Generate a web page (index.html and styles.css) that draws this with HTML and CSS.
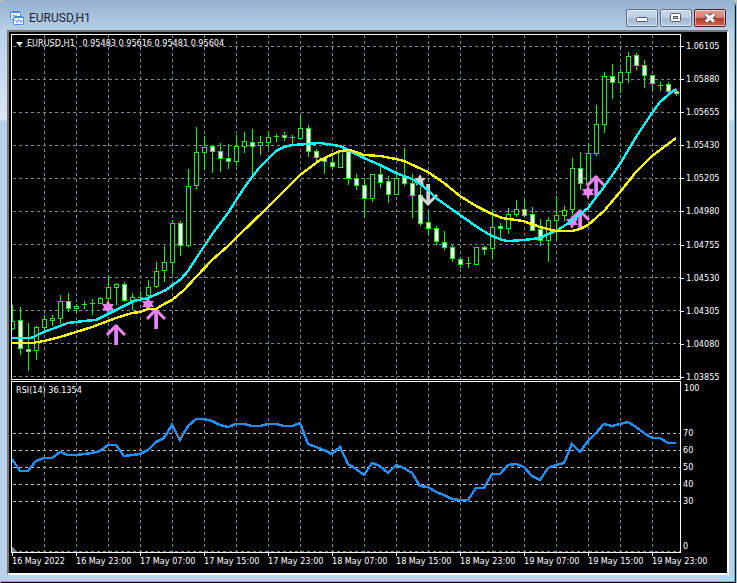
FILE: index.html
```html
<!DOCTYPE html>
<html lang="en">
<head>
    <meta charset="UTF-8">
    <meta name="viewport" content="width=device-width, initial-scale=1.0">
    <title>EURUSD,H1</title>
    <link rel="stylesheet" href="styles.css">
</head>
<body>
    <div class="window">
        <div class="titlebar">
            <svg class="logo" width="14" height="14" viewBox="0 0 14 14">
                <rect x="0.5" y="0.5" width="10" height="8" rx="1" fill="#fff" stroke="#4a8ae8"/>
                <path d="M0.5 1.5h10" stroke="#4a8ae8"/>
                <path d="M2 5.5l1.5-2 1.5 2 2-2" fill="none" stroke="#4a8ae8"/>
                <rect x="3.5" y="5.5" width="10" height="8" rx="1" fill="#fff" stroke="#4a8ae8"/>
                <path d="M3.5 6.5h10" stroke="#4a8ae8"/>
                <path d="M5 8.5l2 3 2-3 2 3 1-2" fill="none" stroke="#4a8ae8"/>
            </svg>
            <h1 class="title">EURUSD,H1</h1>
            <div class="controls">
                <button class="control" aria-label="Minimize">
                    <svg width="12" height="10" viewBox="0 0 12 10">
                        <rect x="0.5" y="4.5" width="11" height="4" rx="1" fill="#fff" stroke="#535a66"/>
                    </svg>
                </button>
                <button class="control" aria-label="Maximize">
                    <svg width="12" height="10" viewBox="0 0 12 10">
                        <rect x="0.5" y="0.5" width="10" height="8" rx="1" fill="#fff" stroke="#535a66"/>
                        <rect x="3.5" y="3.5" width="4" height="2" fill="#a9c0da" stroke="#535a66"/>
                    </svg>
                </button>
                <button class="control close" aria-label="Close">
                    <svg width="12" height="10" viewBox="0 0 12 10">
                        <path d="M2 1.5l8 7M10 1.5l-8 7" stroke="#5b4450" stroke-width="5"/>
                        <path d="M2 1.5l8 7M10 1.5l-8 7" stroke="#fff" stroke-width="3"/>
                    </svg>
                </button>
            </div>
        </div>
        <div class="chart">
            <div class="pane">
                <div class="legend">
                    <svg class="arrow" width="7" height="4" viewBox="0 0 7 4"><path d="M0 0h7L3.5 4z" fill="#fff"/></svg>
                    <span>EURUSD,H1&nbsp;&nbsp; 0.95483 0.95616 0.95481 0.95604</span>
                </div>
                <svg id="price" class="plot" viewBox="11 34 670 346">
                    <defs>
                        <g id="star6"><path d="M0-7L2-3H6L4 0 6 3H2L0 7-2 3H-6L-4 0-6-3H-2z"/></g>
                        <g id="star5"><path d="M0-6L2-2H6L3 1 4 6 0 3-4 6-3 1-6-2H-2z"/></g>
                        <g id="arrow">
                            <path d="M-1 2V21M-9 10L0 1" stroke="#8a6cff" stroke-width="2"/>
                            <path d="M0.5 1V21M-9 11L0 2 9 11" stroke-width="3"/>
                        </g>
                        <g id="arrow-down">
                            <path d="M-1 0V20" stroke="#7f8fb0" stroke-width="2"/>
                            <path d="M0.5 0V20M-9 11L0 20 9 11" stroke-width="3"/>
                        </g>
                    </defs>
                </svg>
            </div>
            <div class="axis price-axis" id="price-axis"></div>
            <div class="pane">
                <div class="legend">RSI(14) 36.1354</div>
                <svg id="rsi" class="plot" viewBox="11 381 670 172"></svg>
            </div>
            <div class="axis rsi-axis">
                <span class="label top">100</span>
                <div class="levels">
                    <span class="label">70</span>
                    <span class="label">60</span>
                    <span class="label">50</span>
                    <span class="label">40</span>
                    <span class="label">30</span>
                </div>
                <span class="label">0</span>
            </div>
            <div class="time-axis" id="time-axis"></div>
        </div>
    </div>
    <script src="chart.js"></script>
</body>
</html>
```
FILE: styles.css
```css
body {
  margin: 0;
  padding: 0 1px 1px 0;
  background: #b4bcc4;
  font-family: "DejaVu Sans Condensed", "DejaVu Sans", sans-serif;
  font-stretch: condensed;
}
.window {
  box-sizing: border-box;
  padding: 0 5px 6px 7px;
  border-right: 1px solid #3cc8e0;
  border-bottom: 1px solid #3cc8e0;
  border-radius: 6px 6px 0 0;
  box-shadow: 1px 1px 0 #000;
  margin-right: 1px;
  background: linear-gradient(#95b1cf 0, #b9d1ea 32px, #dbe7f5 120px, #b9d1ea 121px);
}
.titlebar {
  display: flex;
  align-items: center;
  height: 30px;
  padding: 0 3px;
}
.logo {
  margin-top: 6px;
}
.title {
  flex: 1;
  margin: 6px 0 0 5px;
  font: 12px/20px Roboto, sans-serif;
  color: #1c2430;
}
.controls {
  display: flex;
  gap: 2px;
  margin-top: 6px;
}
.control {
  box-sizing: border-box;
  display: flex;
  align-items: center;
  justify-content: center;
  width: 32px;
  height: 18px;
  padding: 0;
  border: 1px solid #5f7287;
  border-radius: 2px;
  box-shadow: inset 0 0 0 1px rgba(255,255,255,.5);
  background: linear-gradient(#c8d8ea 0, #bccfe4 50%, #9fb7d1 50%, #b4cae3 100%);
}
.control.close {
  border-color: #4f1f25;
  background: linear-gradient(#dba093 0, #cf7f70 50%, #b5342a 50%, #cf6a50 100%);
}
.chart {
  display: grid;
  grid-template-columns: minmax(0, 1fr) 46px;
  row-gap: 1px;
  padding: 2px 0 0 2px;
  border: 2px solid #fff;
  border-top-color: #777;
  border-left-color: #777;
  background: #000;
  color: #fff;
  font-size: 9px;
  line-height: 11px;
  white-space: nowrap;
}
.pane {
  position: relative;
}
.plot {
  display: block;
  width: 100%;
  shape-rendering: crispEdges;
}
.legend {
  position: absolute;
  left: 5px;
  top: 4px;
  display: flex;
  align-items: center;
  gap: 4px;
}
.axis {
  display: flex;
  flex-direction: column;
  justify-content: space-between;
}
.price-axis {
  padding-top: 7px;
  margin-bottom: -3px;
}
.price-axis .label {
  display: flex;
  align-items: center;
  gap: 2px;
}
.price-axis .label::before {
  content: "";
  width: 3px;
  height: 1px;
  background: #fff;
}
.rsi-axis {
  padding: 2px 0 1px 2px;
}
.rsi-axis .top {
  padding-left: 1px;
}
.levels {
  display: flex;
  flex-direction: column;
  line-height: 17px;
}
.time-axis {
  grid-column: 1 / -1;
  display: flex;
  height: 20px;
  margin-top: -1px;
  padding-left: 1px;
}
.time-axis .label {
  flex: 0 0 64px;
}
.time-axis .label::before {
  content: "";
  display: block;
  width: 1px;
  height: 3px;
  background: #fff;
}
.grid {
  stroke: #778899;
  stroke-dasharray: 3 3;
}
.level {
  stroke: #c0c0c0;
  stroke-dasharray: 3 3;
}
.frame {
  fill: none;
  stroke: #fff;
}
.wick {
  stroke: #00ff00;
}
.candle {
  stroke: #00ff00;
  fill: #000;
}
.candle.down {
  fill: #fff;
}
.line {
  fill: none;
  stroke-width: 2.4;
}
.fast {
  stroke: #00ffff;
}
.slow {
  stroke: #ffff00;
}
.rsi {
  stroke: #1e90ff;
}
.mark {
  shape-rendering: auto;
}
.buy {
  fill: #ee82ee;
}
.sell {
  fill: #d3d3d3;
}
.stroke {
  fill: none;
}
.stroke.buy {
  stroke: #ee82ee;
}
.stroke.sell {
  stroke: #d3d3d3;
}
```
FILE: chart.js
```js
// [high, low, body top, body bottom, down], one bar every 8px
const bars = [
    [305,329,321,329,0],[307,354,320,349,1],[323,370,349,352,1],[326,359,327,351,0],
    [315,331,319,328,0],[315,325,318,321,0],[295,323,301,319,0],[293,311,301,309,1],
    [304,312,306,309,0],[301,308,304,305,0],[299,314,303,304,0],[297,303,298,304,0],
    [276,298,287,299,0],[283,304,284,288,0],[282,301,284,301,1],[293,309,297,301,0],
    [291,299,297,298,0],[280,299,287,296,0],[262,287,271,287,0],[246,281,262,271,0],
    [220,273,223,263,0],[221,255,223,246,1],[169,246,186,246,0],[127,188,152,186,0],
    [136,169,147,153,0],[145,172,146,152,1],[143,171,151,159,1],[144,168,158,162,1],
    [135,165,146,162,0],[132,152,141,147,0],[129,175,142,147,1],[136,154,142,146,0],
    [131,147,137,143,0],[134,141,136,137,0],[132,140,135,138,1],[135,143,137,138,0],
    [115,139,128,139,0],[125,156,128,152,1],[149,160,151,158,1],[157,173,158,162,1],
    [157,168,162,167,1],[151,167,151,168,0],[149,184,151,179,1],[174,189,178,186,1],
    [178,217,185,199,1],[174,201,174,199,0],[167,187,174,183,1],[176,202,181,195,1],
    [171,194,178,195,0],[148,185,177,184,1],[174,217,183,196,1],[187,225,195,224,1],
    [212,235,222,229,1],[226,244,228,242,1],[231,249,242,248,1],[245,261,247,259,1],
    [257,267,259,265,1],[257,267,263,264,0],[247,264,247,265,0],[246,254,247,250,1],
    [209,257,227,249,0],[223,237,226,229,1],[208,233,214,229,0],[200,216,209,215,0],
    [199,216,209,216,1],[207,230,214,231,1],[219,245,229,241,1],[217,261,220,241,0],
    [196,239,215,221,0],[206,220,210,216,0],[158,214,168,210,0],[152,189,168,184,1],
    [143,184,153,184,0],[105,155,124,154,0],[72,132,76,125,0],[64,98,76,83,1],
    [69,92,72,83,0],[52,82,56,73,0],[53,69,55,66,1],[60,87,65,76,1],
    [75,90,75,84,1],[82,90,85,86,0],[82,93,84,92,1],[89,95,91,94,1]
]
const fast = '12,338 31,338 44,332 68,323 84,321 96,320 108,314 124,306 134,301 148,298 166,290 181,279 188,271 197,257 213,233 228,213 244,188 252,177 260,167 276,151 284,147 292,145 308,144 320,143 340,146 348,150 364,158 380,165 396,173 412,179 420,184 428,190 436,198 460,215 480,229 492,236 502,240 508,241 524,240 540,238 548,234 556,231 572,221 588,208 604,187 620,164 636,137 652,113 660,102 668,95 676,89'
const slow = '12,343 32,343 44,341 60,337 76,332 92,327 108,321 116,318 132,313 140,312 148,309 156,309 164,304 172,300 184,290 196,277 212,260 228,246 236,238 268,207 300,175 320,160 340,151 350,150 364,155 380,156 396,159 404,161 428,172 444,183 460,196 476,206 492,214 502,218 523,221 540,227 556,231 572,231 580,229 588,225 604,211 620,192 636,172 652,156 676,138'
const rsi = [
    459,471,471,461,458,458,452,455,455,454,453,451,445,445,456,455,454,450,442,438,
    425,440,426,419,419,421,425,427,424,424,426,426,424,424,426,426,423,444,447,450,
    454,447,464,469,475,463,466,473,465,468,473,486,487,492,495,499,500,500,488,488,
    474,474,465,464,467,476,480,468,465,463,444,452,441,433,424,426,424,422,427,433,
    438,438,443,443
]
const times = ['16 May 2022', '16 May 23:00', '17 May 07:00', '17 May 15:00', '17 May 23:00', '18 May 07:00', '18 May 15:00', '18 May 23:00', '19 May 07:00', '19 May 15:00', '19 May 23:00']

const left = 11
const right = 680

function hline(y, cls) {
    return `<path class="${cls}" d="M${left + 2} ${y + .5}H${right}"/>`
}
function vlines(top, bottom) {
    let s = ''
    for (let x = 44; x < right; x += 32) {
        s += `<path class="grid" d="M${x + .5} ${top}V${bottom}"/>`
    }
    return s
}
function frame(top, bottom) {
    return `<rect class="frame" x="${left + .5}" y="${top + .5}" width="${right - left}" height="${bottom - top}"/>`
}
function candle([high, low, top, bottom, down], i) {
    const x = 12 + i * 8
    let s = `<path class="wick" d="M${x + .5} ${high}V${low + 1}"/>`
    if (bottom - top < 2) {
        // open equals close
        s += `<path class="wick" d="M${x - 2} ${top + .5}h5"/>`
    } else {
        s += `<rect class="candle${down ? ' down' : ''}" x="${x - 1.5}" y="${top + .5}" width="4" height="${bottom - top - 1}"/>`
    }
    return s
}
function use(id, cls, x, y) {
    return `<use href="#${id}" class="mark ${cls}" x="${x}" y="${y}"/>`
}

function drawPrice() {
    let s = vlines(35, 379)
    for (let y = 46; y < 379; y += 33) s += hline(y, 'grid')
    s += bars.map(candle).join('')
    s += use('star6', 'buy', 108, 307) + use('star6', 'buy', 148, 304)
    s += use('star6', 'buy', 572, 222) + use('star6', 'buy', 588, 192)
    s += use('arrow', 'stroke buy', 116, 324) + use('arrow', 'stroke buy', 156, 308)
    s += use('arrow', 'stroke buy', 580, 209) + use('arrow', 'stroke buy', 596, 175)
    s += use('star5', 'sell', 420, 180) + use('arrow-down', 'stroke sell', 428, 184)
    s += `<polyline class="line fast" points="${fast}"/>`
    s += `<polyline class="line slow" points="${slow}"/>`
    s += frame(34, 379)
    document.getElementById('price').innerHTML += s
}
function drawRsi() {
    let s = vlines(382, 552)
    for (let y = 433; y <= 501; y += 17) s += hline(y, 'level')
    s += hline(551, 'grid')
    s += '<path fill="#778899" d="M12 547l5 5h-5z"/>'
    const points = rsi.map((y, i) => `${12 + i * 8},${y}`)
    s += `<polyline class="line rsi" points="${points.join(' ')}"/>`
    s += frame(381, 552)
    document.getElementById('rsi').innerHTML = s
}
function label(text) {
    return `<span class="label">${text}</span>`
}
function drawAxes() {
    let s = ''
    for (let i = 0; i < 11; i++) s += label((1.06105 - i * .00225).toFixed(5))
    document.getElementById('price-axis').innerHTML = s
    document.getElementById('time-axis').innerHTML = times.map(label).join('')
}

drawPrice()
drawRsi()
drawAxes()
```
